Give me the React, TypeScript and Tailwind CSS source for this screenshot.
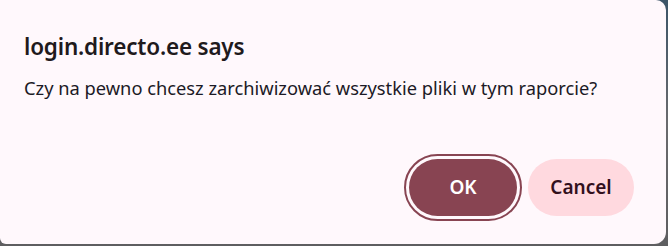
export default function App() {
  return (
    <div className="h-[246px] w-[668px] overflow-hidden bg-gradient-to-b from-[#3c5568] via-[#6a6a6d] to-[#5e5e60]">
      <div
        className="flex h-[244px] w-[666px] flex-col rounded-tr-[10px] rounded-br-[12px] rounded-bl-[6px] bg-[#fff8fc] pl-6 pr-8"
        style={{ fontFamily: '"Noto Sans", "Open Sans", sans-serif' }}
      >
        <h1 className="pt-[32px] text-[22.5px] font-semibold leading-[30px] tracking-[-0.2px] text-[#1f1a1d]">
          login.directo.ee says
        </h1>
        <p className="mt-[14px] text-[18.3px] leading-[24px] text-[#1c1a26]">
          Czy na pewno chcesz zarchiwizować wszystkie pliki w tym raporcie?
        </p>
        <div className="mt-[59px] flex justify-end gap-[11px]">
          <button className="h-[57px] w-[108px] rounded-full bg-[#884452] text-[19px] font-semibold text-white outline-2 outline-offset-[3px] outline-[#884452]">
            OK
          </button>
          <button className="h-[57px] w-[106px] rounded-full bg-[#ffd9df] text-[19px] font-semibold text-[#32101c]">
            Cancel
          </button>
        </div>
      </div>
    </div>
  );
}
